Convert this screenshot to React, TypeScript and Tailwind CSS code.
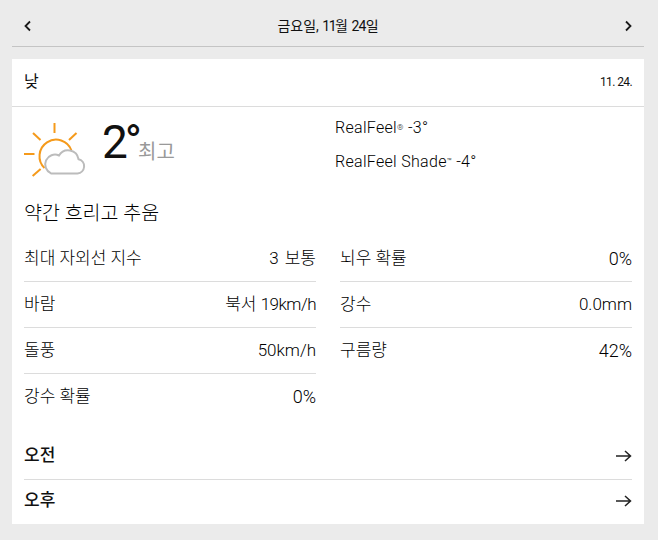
import React from "react";

const font = "font-['Roboto','Noto_Sans_CJK_KR',sans-serif]";

function Chevron({ dir }: { dir: "left" | "right" }) {
  return (
    <svg width="7" height="12" viewBox="0 0 7 12" fill="none" stroke="#1a1a1a" strokeWidth="1.8">
      <path d={dir === "left" ? "M6 1.5 L1.5 6 L6 10.5" : "M1 1.5 L5.5 6 L1 10.5"} />
    </svg>
  );
}

function Arrow() {
  return (
    <svg width="16" height="12" viewBox="0 0 16 12" fill="none" stroke="#222" strokeWidth="1.5">
      <path d="M0 6 H14 M9 1 L14.5 6 L9 11" />
    </svg>
  );
}

function WeatherIcon() {
  return (
    <svg width="62" height="54" viewBox="0 0 62 54" fill="none" className="shrink-0">
      <g stroke="#f59a1b" strokeWidth="2">
        <path d="M30.5 0 V10" />
        <path d="M0 31 H10.5" />
        <path d="M9 10 L16.5 17" />
        <path d="M52.5 10 L45 17" />
        <path d="M8.6 53 L16.6 46" />
        <path d="M20.5 45 A16.5 16.5 0 1 1 47.5 27.5" />
      </g>
      <path
        d="M27 50.4 H53.5 A7.2 7.2 0 0 0 54.5 36.2 A10.5 10.5 0 0 0 35 32.5 A7.4 7.4 0 0 0 27 50.4 Z"
        fill="#fff"
        stroke="#bcbcbc"
        strokeWidth="2"
      />
    </svg>
  );
}

function Row({ label, value, border = true }: { label: string; value: React.ReactNode; border?: boolean }) {
  return (
    <div className={`flex h-[46px] items-center justify-between text-[17px] font-light text-black ${border ? "border-b border-[#dcdcdc]" : ""}`}>
      <span>{label}</span>
      <span>{value}</span>
    </div>
  );
}

const Pct = ({ v }: { v: string }) => <span className="text-[18px]">{v}</span>;

export default function App() {
  return (
    <div className={`${font} h-[540px] w-[658px] bg-[#ebebeb] pl-3 pr-[14px] text-[#111]`}>
      <div className="flex h-[47px] items-center justify-between border-b border-[#c4c4c4] px-3 pt-[6px]">
        <Chevron dir="left" />
        <span className="text-[14px]">
          금요일, <span className="tracking-[-1.5px]">11</span>월 <span className="tracking-[-0.7px]">24</span>일
        </span>
        <Chevron dir="right" />
      </div>
      <div className="mt-3 h-[465px] bg-white">
        <div className="flex h-[48px] items-center justify-between border-b border-[#dcdcdc] px-3 pb-[2px]">
          <span className="text-[16px]">낮</span>
          <span className="text-[12px] tracking-[-0.6px]">11. 24.</span>
        </div>
        <div className="flex px-3 pt-[16px]">
          <WeatherIcon />
          <div className="ml-[16px] flex w-[233px] items-start">
            <span className="-mt-[2px] text-[46px] leading-[42px] tracking-[-3px]">2°</span>
            <span className="-ml-[1px] mt-[16px] text-[20px] leading-[26px] text-[#999]">최고</span>
          </div>
          <div className="-mt-[5px] flex flex-col gap-[14px] text-[16px] font-light leading-[20px] tracking-[0.3px] text-black">
            <span>
              RealFeel<span className="align-top text-[8px]">®</span> -3°
            </span>
            <span>
              RealFeel Shade<span className="align-top text-[8px]">™</span> -4°
            </span>
          </div>
        </div>
        <div className="mt-[24px] px-3 text-[19.5px] font-light leading-[26px] text-black">약간 흐리고 추움</div>
        <div className="mt-[9px] grid grid-cols-2 gap-x-6 px-3">
          <div className="flex flex-col">
            <Row
              label="최대 자외선 지수"
              value={
                <>
                  3 <span className="ml-[2px]">보통</span>
                </>
              }
            />
            <Row
              label="바람"
              value={
                <>
                  북서 <span className="tracking-[-0.5px]">19km/h</span>
                </>
              }
            />
            <Row label="돌풍" value="50km/h" />
            <Row label="강수 확률" value={<Pct v="0%" />} border={false} />
          </div>
          <div className="flex flex-col">
            <Row label="뇌우 확률" value={<Pct v="0%" />} />
            <Row label="강수" value="0.0mm" />
            <Row label="구름량" value={<Pct v="42%" />} border={false} />
          </div>
        </div>
        <div className="mt-[13px] px-3 text-[17px] font-medium">
          <div className="flex h-[47px] items-center justify-between border-b border-[#dcdcdc]">
            <span>오전</span>
            <Arrow />
          </div>
          <div className="flex h-[44px] items-center justify-between pb-[2px]">
            <span>오후</span>
            <Arrow />
          </div>
        </div>
      </div>
    </div>
  );
}
